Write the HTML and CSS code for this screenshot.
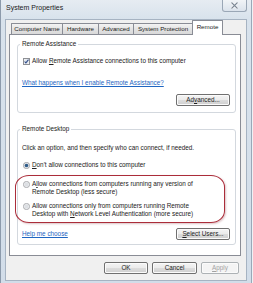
FILE: index.html
```html
<!DOCTYPE html>
<html lang="en">
<head>
<meta charset="utf-8">
<title>System Properties</title>
<link rel="stylesheet" href="styles.css">
</head>
<body>
<div class="window">
  <div class="titlebar">
    <span class="title">System Properties</span>
    <span class="close"><svg width="9" height="7" viewBox="0 0 9 7"><path d="M1.5 0.5 L7.5 6.5 M7.5 0.5 L1.5 6.5" stroke="#fff" stroke-width="2.4"/><path d="M1.5 0.5 L7.5 6.5 M7.5 0.5 L1.5 6.5" stroke="#7d8996" stroke-width="1.1"/></svg></span>
  </div>
  <div class="dialog">
    <div class="tabs">
      <div class="tab t1">Computer Name</div>
      <div class="tab t2">Hardware</div>
      <div class="tab t3">Advanced</div>
      <div class="tab t4">System Protection</div>
      <div class="tab t5 selected">Remote</div>
    </div>
    <div class="panel">
      <fieldset class="group g1">
        <legend>Remote Assistance</legend>
        <div class="opt-row">
          <svg class="box" width="7" height="7" viewBox="0 0 7 7"><rect x="0.5" y="0.5" width="6" height="6" fill="#f5f6f8" stroke="#8e9094"/><rect x="1.5" y="1.5" width="4" height="4" fill="#dfe4ea"/><path d="M1.6 3.5 L2.9 4.9 L5.5 1.7" fill="none" stroke="#34508c" stroke-width="1.1"/></svg>
          <span>Allow <u>R</u>emote Assistance connections to this computer</span>
        </div>
        <a class="link l1">What happens when I enable Remote Assistance?</a>
        <div class="btn-row">
          <span class="btn wide">Ad<u>v</u>anced...</span>
        </div>
      </fieldset>
      <fieldset class="group g2">
        <legend>Remote Desktop</legend>
        <p class="intro">Click an option, and then specify who can connect, if needed.</p>
        <div class="opt-row r1">
          <svg class="box" width="7" height="7" viewBox="0 0 7 7"><circle cx="3.5" cy="3.5" r="3.1" fill="#eceef1" stroke="#8e9094" stroke-width="0.8"/><circle cx="3.5" cy="3.5" r="1.8" fill="#2d5b88"/></svg>
          <span><u>D</u>on't allow connections to this computer</span>
        </div>
        <div class="options">
          <div class="opt-row r2">
            <svg class="box" width="7" height="7" viewBox="0 0 7 7"><circle cx="3.5" cy="3.5" r="3.1" fill="#eef0f2" stroke="#9a9c9f" stroke-width="0.8"/><circle cx="3.5" cy="3.5" r="1.9" fill="#dcdfe3"/></svg>
            <span>A<u>l</u>low connections from computers running any version of<br>Remote Desktop (less secure)</span>
          </div>
          <div class="opt-row r3">
            <svg class="box" width="7" height="7" viewBox="0 0 7 7"><circle cx="3.5" cy="3.5" r="3.1" fill="#eef0f2" stroke="#9a9c9f" stroke-width="0.8"/><circle cx="3.5" cy="3.5" r="1.9" fill="#dcdfe3"/></svg>
            <span>Allow connections only from computers running Remote<br>Desktop with <u>N</u>etwork Level Authentication (more secure)</span>
          </div>
        </div>
        <div class="btn-row split">
          <a class="link">Help me choose</a>
          <span class="btn wide"><u>S</u>elect Users...</span>
        </div>
      </fieldset>
    </div>
    <div class="actions">
      <span class="btn ok">OK</span>
      <span class="btn cancel">Cancel</span>
      <span class="btn apply disabled"><u>A</u>pply</span>
    </div>
  </div>
</div>
</body>
</html>
```
FILE: styles.css
```css
* { box-sizing: border-box; }
html, body { margin: 0; padding: 0; }
body {
  width: 253px;
  height: 283px;
  overflow: hidden;
  background: #eef1f4;
  font-family: "Liberation Sans", Arial, sans-serif;
  font-size: 6.35px;
  line-height: 8px;
  color: #222;
}
.window {
  width: 252px;
  height: 283px;
  border-left: 1px solid #8c9aab;
  border-right: 1px solid #9aa8b8;
  padding: 0 4px;
  background: linear-gradient(180deg, #e6ecf2 0, #d8e2ec 19px, #d2dde9 100%);
  display: flex;
  flex-direction: column;
}
.titlebar {
  height: 19px;
  flex: none;
  display: flex;
  align-items: flex-start;
}
.title {
  padding: 4px 0 0 1px;
  font-size: 7px;
  line-height: 8px;
  color: #1b1b1b;
}
.close {
  margin-left: auto;
  width: 25px;
  height: 12px;
  border: 1px solid #9aa7b6;
  border-top: none;
  border-radius: 0 0 3px 3px;
  background: linear-gradient(180deg, #f1f4f7, #dbe3ec);
  display: flex;
  align-items: center;
  justify-content: center;
}
.dialog {
  height: 262px;
  flex: none;
  border: 1px solid #a6b3c2;
  background: #f0f0f0;
  display: flex;
  flex-direction: column;
}
.tabs {
  height: 14px;
  margin-left: 5px;
  display: flex;
  align-items: flex-end;
}
.tab {
  height: 11px;
  border: 1px solid #898c95;
  border-bottom: none;
  border-radius: 1px 1px 0 0;
  background: linear-gradient(180deg, #f3f3f3, #e3e3e3 50%, #d9d9d9);
  display: flex;
  align-items: center;
  justify-content: center;
  font-size: 6.2px;
  white-space: nowrap;
  margin-left: -1px;
}
.t1 { width: 52px; margin-left: 0; }
.t2 { width: 37px; }
.t3 { width: 36px; }
.t4 { width: 60px; }
.t5 { width: 31px; }
.tab.selected {
  height: 15px;
  margin-bottom: -1px;
  background: #fff;
  position: relative;
  z-index: 1;
  padding-bottom: 2px;
}
.panel {
  width: 232px;
  height: 222px;
  margin-left: 3px;
  border: 1px solid #898c95;
  background: #fff;
  padding: 0 0 0 7px;
}
.group {
  width: 219px;
  margin: 0;
  border: 1px solid #d3d8de;
  border-radius: 3px;
  padding: 0 5px 0 4px;
  min-width: 0;
}
.group legend {
  padding: 0 2px;
  margin-left: -2px;
  line-height: 8px;
  color: #222;
}
.g1 { margin-top: 5px; padding-top: 9px; padding-bottom: 6px; }
.g2 { margin-top: 12px; padding-top: 11px; padding-bottom: 4px; }
.opt-row {
  display: flex;
  align-items: center;
  gap: 2px;
  white-space: nowrap;
  height: 8px;
}
.box { flex: none; margin-left: 1px; }
.link {
  display: block;
  color: #1f66c2;
  text-decoration: underline;
  white-space: nowrap;
}
.l1 { margin-top: 14px; }
.btn-row {
  display: flex;
  justify-content: flex-end;
  align-items: center;
  margin-top: 7px;
}
.btn-row.split { justify-content: space-between; margin-top: 10px; }
.btn {
  height: 12px;
  border: 1px solid #707070;
  border-radius: 2px;
  background: linear-gradient(180deg, #f4f4f4 0, #ebebeb 50%, #dddddd 50%, #cfcfcf 100%);
  box-shadow: inset 0 0 0 1px #fbfbfb;
  display: flex;
  align-items: center;
  justify-content: center;
  white-space: nowrap;
  color: #1e1e1e;
}
.btn.wide { width: 54px; }
.intro { margin: 0; white-space: nowrap; }
.r1 { margin-top: 9px; }
.options {
  position: relative;
  margin-top: 11px;
}
.options::before {
  content: "";
  position: absolute;
  left: -7px;
  top: -5px;
  width: 208px;
  height: 46px;
  border: 1.5px solid #ab2d3a;
  border-radius: 14px / 12px;
  box-shadow: 1px 1px 2px rgba(120, 20, 30, 0.25);
}
.r2, .r3 { height: 16px; align-items: flex-start; }
.r3 { margin-top: 6px; }
.r2 .box, .r3 .box { margin-top: 0.5px; }
.actions {
  display: flex;
  justify-content: flex-end;
  gap: 4px;
  margin: 6px 7px 0 0;
}
.ok { width: 44px; }
.cancel { width: 45px; }
.apply { width: 38px; }
.btn.disabled {
  color: #a3a3a3;
  border-color: #adb2b5;
  background: #f4f4f4;
}
```
